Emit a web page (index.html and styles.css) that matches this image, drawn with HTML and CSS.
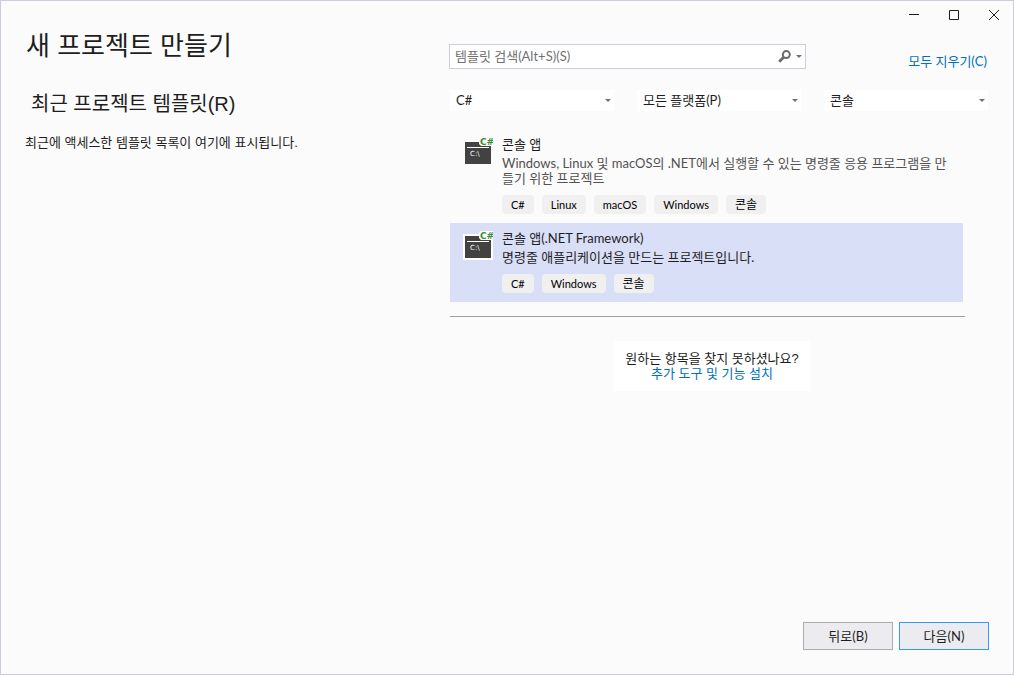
FILE: index.html
```html
<!DOCTYPE html>
<html lang="ko">
<head>
<meta charset="utf-8">
<meta name="viewport" content="width=device-width, initial-scale=1">
<title>새 프로젝트 만들기</title>
<link rel="stylesheet" href="styles.css">
</head>
<body>
<div class="window">
  <header class="titlebar">
    <button class="caption" aria-label="최소화"><svg width="10" height="10"><path d="M0 4.5h10" /></svg></button>
    <button class="caption" aria-label="최대화"><svg width="10" height="10"><path d="M.5.5h9v9h-9z" /></svg></button>
    <button class="caption" aria-label="닫기"><svg class="close" width="10" height="10"><path d="M0 0l10 10M10 0L0 10" /></svg></button>
  </header>
  <main class="content">
    <section class="recent">
      <h1>새 프로젝트 만들기</h1>
      <h2>최근 프로젝트 템플릿(R)</h2>
      <p>최근에 액세스한 템플릿 목록이 여기에 표시됩니다.</p>
    </section>
    <section class="templates">
      <div class="search-row">
        <div class="search">
          <input type="text" aria-label="템플릿 검색" placeholder="템플릿 검색(Alt+S)(S)">
          <button class="search-button" aria-label="검색">
            <svg width="13" height="13" viewBox="0 0 13 13"><circle cx="8.3" cy="4.6" r="3.5" fill="none" stroke="#6a6a6a" stroke-width="2"/><path d="M5.6 7.3L1.2 11.7" stroke="#6a6a6a" stroke-width="2.8"/></svg>
            <svg width="6" height="3"><path d="M0 0h6L3 3z" fill="#717171"/></svg>
          </button>
        </div>
        <a class="link" href="#">모두 지우기(C)</a>
      </div>
      <div class="filters">
        <div class="filter"><select aria-label="언어"><option>C#</option></select><svg width="6" height="3"><path d="M0 0h6L3 3z"/></svg></div>
        <div class="filter"><select aria-label="플랫폼"><option>모든 플랫폼(P)</option></select><svg width="6" height="3"><path d="M0 0h6L3 3z"/></svg></div>
        <div class="filter"><select aria-label="프로젝트 형식"><option>콘솔</option></select><svg width="6" height="3"><path d="M0 0h6L3 3z"/></svg></div>
      </div>
      <div class="results">
        <ul class="list">
          <li class="item">
            <svg class="icon" width="30" height="30" viewBox="0 0 30 30" aria-hidden="true">
              <path d="M2 5h26v22H2z" fill="#424242"/><path d="M4 10.5h22" stroke="#fff"/>
              <path d="M16 0h14v9H18l-2-2z" fill="#fbfbfb"/>
              <text class="prompt" x="7" y="19">C:\</text><text class="badge" x="17" y="8">C#</text>
            </svg>
            <div class="details">
              <h3>콘솔 앱</h3>
              <p>Windows, Linux 및 macOS의 .NET에서 실행할 수 있는 명령줄 응용 프로그램을 만들기 위한 프로젝트</p>
              <div class="tags"><span>C#</span><span>Linux</span><span>macOS</span><span>Windows</span><span class="hangul">콘솔</span></div>
            </div>
          </li>
          <li class="item selected">
            <svg class="icon" width="30" height="30" viewBox="0 0 30 30" aria-hidden="true">
              <path d="M0 3h30v26H0z" fill="#fff"/>
              <path d="M2 5h26v22H2z" fill="#424242"/><path d="M4 10.5h22" stroke="#fff"/>
              <path d="M18 0h12v9H18l-2-2V2z" fill="#fff"/>
              <text class="prompt" x="7" y="19">C:\</text><text class="badge" x="17" y="8">C#</text>
            </svg>
            <div class="details">
              <h3>콘솔 앱(.NET Framework)</h3>
              <p>명령줄 애플리케이션을 만드는 프로젝트입니다.</p>
              <div class="tags"><span>C#</span><span>Windows</span><span class="hangul">콘솔</span></div>
            </div>
          </li>
        </ul>
        <div class="more">
          <p>원하는 항목을 찾지 못하셨나요?</p>
          <a class="link" href="#">추가 도구 및 기능 설치</a>
        </div>
      </div>
    </section>
  </main>
  <footer class="actions">
    <button class="action">뒤로(B)</button>
    <button class="action primary">다음(N)</button>
  </footer>
</div>
</body>
</html>
```
FILE: styles.css
```css
* { box-sizing: border-box; }

body, h1, h2, h3, p, ul { margin: 0; padding: 0; font-weight: 400; }

body {
  color: #1e1e1e;
  font: 13px/15px Lato, "Noto Sans CJK KR", sans-serif;
}

button, input, select { font: inherit; color: inherit; border-radius: 0; }

.window {
  display: flex;
  flex-direction: column;
  min-height: 100vh;
  border: 1px solid #ccccdd;
  background: #fbfbfb;
}

.titlebar { display: flex; justify-content: flex-end; height: 28px; margin-right: -1px; }

.caption {
  display: flex;
  align-items: center;
  justify-content: center;
  width: 40px;
  padding: 0;
  border: 0;
  background: none;
}
.caption svg { fill: none; stroke: #1e1e1e; }
.caption .close { stroke-width: 1; overflow: visible; }

.content {
  display: grid;
  grid-template-columns: 400px 1fr;
  gap: 24px;
  flex: 1;
  padding: 0 25px 0 24px;
}

.recent, .more { font-family: "Liberation Sans", "Noto Sans CJK KR", sans-serif; }
h1 { padding-left: 1px; font-size: 26px; line-height: 34px; }
h2 { margin-top: 28px; padding-left: 6px; font-size: 20px; line-height: 26px; }
.recent p { margin-top: 18px; }

.search-row { display: flex; align-items: center; justify-content: space-between; margin-top: 15px; }

.search {
  display: flex;
  width: 357px;
  height: 25px;
  border: 1px solid #ccccdd;
  background: #fff;
}
.search input { flex: 1; min-width: 0; padding: 0 5px; border: 0; background: none; }
.search input::placeholder { color: #717171; opacity: 1; }
.search-button {
  display: flex;
  align-items: center;
  gap: 5px;
  padding: 0 3px;
  border: 0;
  background: none;
}

.link { color: #0070c0; text-decoration: none; }
.search-row .link { padding: 10px 1px 0 0; }

.filters { display: grid; grid-template-columns: repeat(3, 1fr); gap: 23px; margin-top: 21px; padding-left: 1px; }
.filter { display: flex; align-items: center; height: 21px; padding-right: 3px; background: #fff; }
.filter select {
  flex: 1;
  min-width: 0;
  padding: 0 6px;
  border: 0;
  background: none;
  appearance: none;
}
.filter svg { fill: #717171; }

.results { width: 525px; max-width: 100%; margin-top: 18px; padding-left: 1px; }
.list { max-width: 515px; list-style: none; padding-bottom: 14px; border-bottom: 1px solid #a0a0a0; }
.item { display: flex; gap: 9px; margin-right: 2px; padding: 8px 16px 9px 13px; }
.item.selected { background: #dadff8; }
.icon { flex: none; }
.prompt { fill: #fff; font: 7px "DejaVu Sans", sans-serif; }
.badge { fill: #388a34; font: bold 9px "DejaVu Sans", sans-serif; }

.details { flex: 1; }
h3 { font-size: 13px; line-height: 15px; }
.details p { margin-top: 4px; color: #525252; word-break: break-all; }
.selected p { color: #1e1e1e; }

.tags { display: flex; gap: 8px; margin-top: 9px; }
.tags span {
  padding: 0 9px;
  border-radius: 4px;
  background: #f0f0f0;
  color: #000;
  font-size: 11px;
  line-height: 19px;
}
.tags .hangul { font-size: 12px; }

.more { width: fit-content; margin: 24px auto 0; padding: 10px 12px; background: #fff; text-align: center; }
.more .link { display: block; }

.actions { display: flex; justify-content: flex-end; gap: 6px; padding: 0 24px 24px; }
.action { width: 90px; height: 28px; padding: 0; border: 1px solid #acacac; background: #ececf0; }
.action.primary { border-color: #3399ff; }
```
